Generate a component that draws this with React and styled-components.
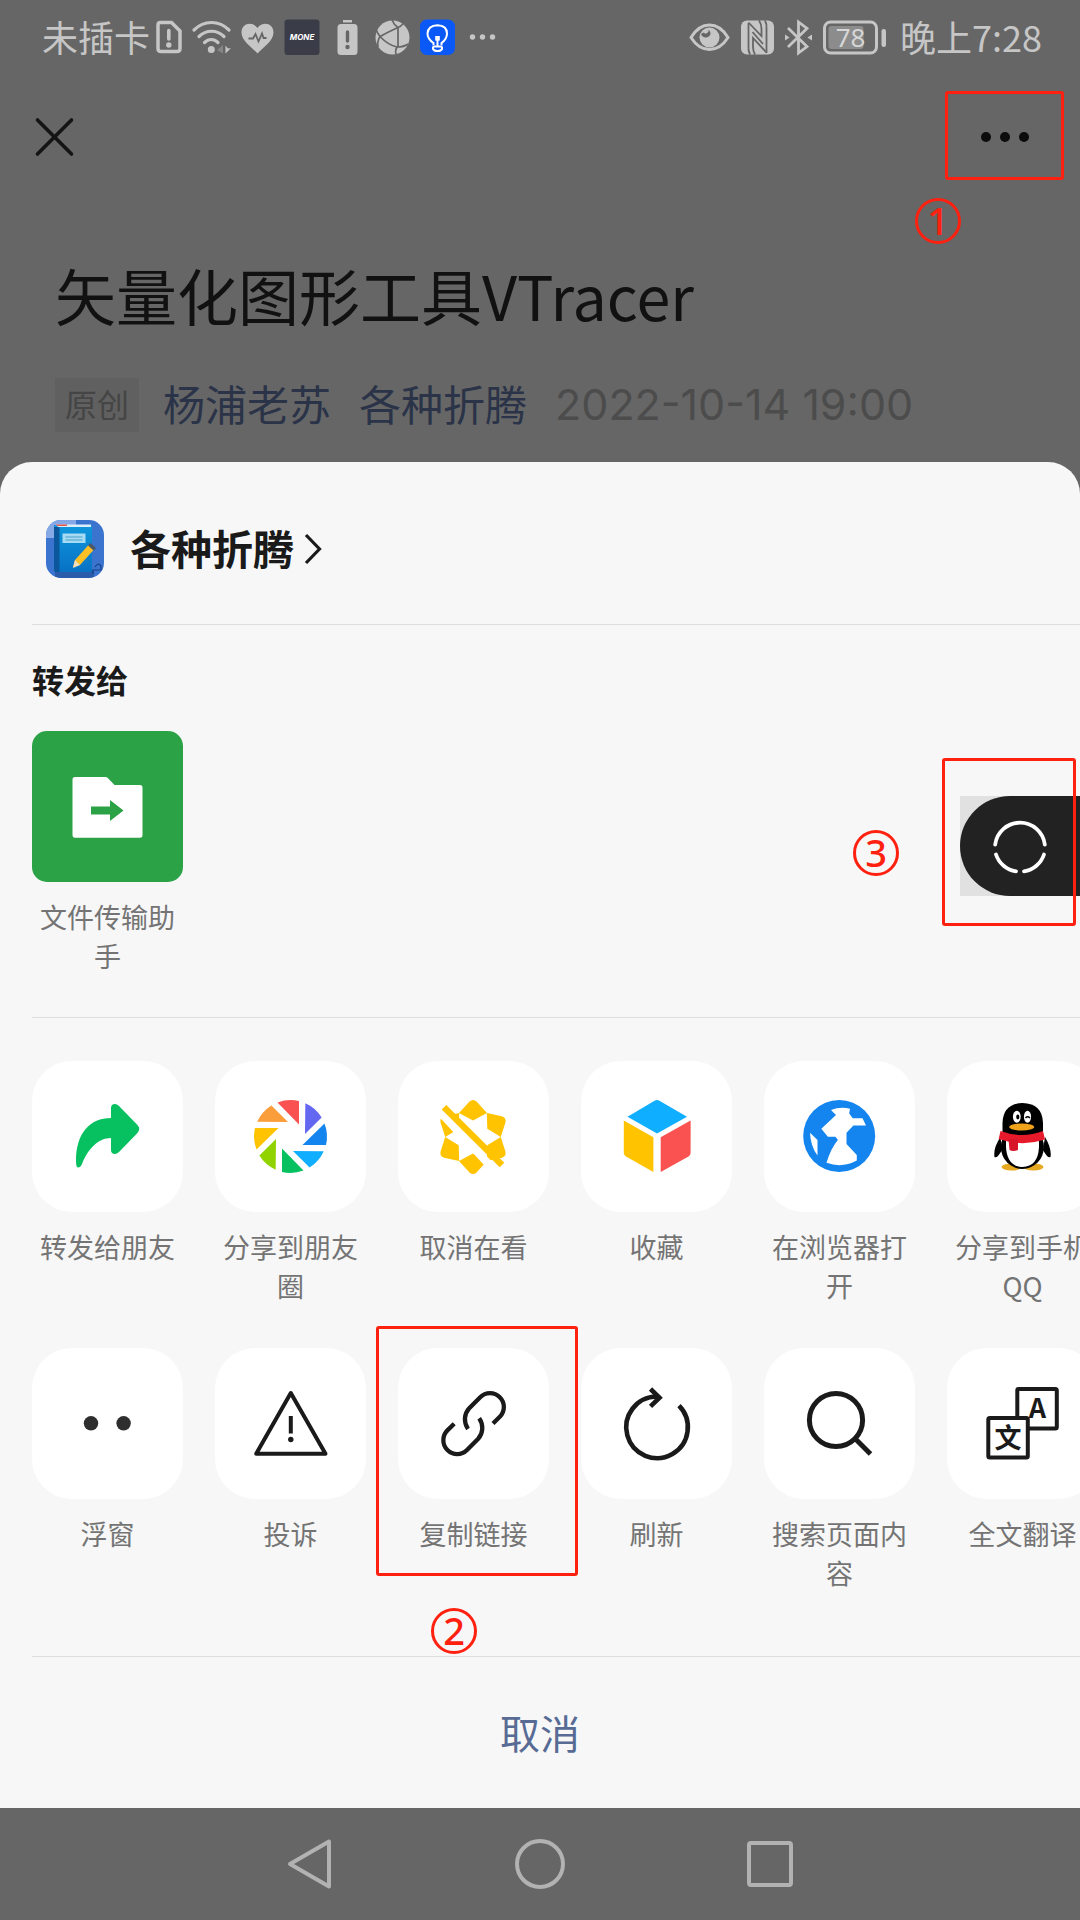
import React from "react";
import styled, { createGlobalStyle } from "styled-components";

const colors = {
  dim: "#666666",
  ink: "#1a1a1a",
  sheet: "#f7f7f7",
  line: "#dedede",
  label: "#747474",
  status: "#c6c6c6",
  mark: "#ff2010",
  link: "#576b95",
};

const GlobalStyle = createGlobalStyle`
  *, *::before, *::after { box-sizing: border-box; }
  body {
    margin: 0;
    background: ${colors.dim};
    font-family: "Noto Sans CJK SC", "Noto Sans", sans-serif;
    color: ${colors.ink};
  }
  button {
    margin: 0;
    padding: 0;
    border: 0;
    background: none;
    color: inherit;
    font: inherit;
    cursor: pointer;
  }
  svg { display: block; flex: none; overflow: visible; }
`;

const Page = styled.div`
  display: flex;
  flex-direction: column;
  min-height: 100vh;
  overflow-x: hidden;
`;

/* Status bar */
const StatusBar = styled.header`
  display: flex;
  align-items: center;
  justify-content: space-between;
  height: 74px;
  padding: 0 38px 0 42px;
  color: ${colors.status};
  font-size: 36px;
  line-height: 48px;
`;

const StatusGroup = styled.div`
  display: flex;
  align-items: center;
  gap: ${(p) => p.$gap}px;
`;

const StatusText = styled.span`
  padding-bottom: 2px;
`;

/* Article behind the sheet */
const TopBar = styled.nav`
  display: flex;
  align-items: center;
  justify-content: space-between;
  height: 126px;
  padding: 0 16px 0 32px;
`;

const IconButton = styled.button`
  position: relative;
  display: flex;
  align-items: center;
  justify-content: center;
  width: ${(p) => p.$w}px;
  height: ${(p) => p.$h}px;
`;

const Article = styled.article`
  padding: 55px 55px 30px;
`;

const Title = styled.h1`
  margin: 0;
  color: #111111;
  font-size: 61px;
  font-weight: 400;
  line-height: 80px;
`;

const Meta = styled.div`
  display: flex;
  align-items: center;
  gap: 28px;
  margin-top: 43px;
  font-size: 42px;
  line-height: 50px;
  white-space: nowrap;
`;

const Tag = styled.span`
  padding: 0 10px 4px;
  margin-right: -4px;
  background: #606060;
  color: #454545;
  font-size: 32px;
`;

const MetaLink = styled.a`
  padding-bottom: 4px;
  color: #2a3348;
  text-decoration: none;
`;

const Time = styled.time`
  padding-bottom: 2px;
  color: #4c4c4c;
  font-family: Inter, "Noto Sans", sans-serif;
  font-size: 43px;
`;

/* Share sheet */
const Sheet = styled.section`
  border-radius: 32px 32px 0 0;
  background: ${colors.sheet};
`;

const Divider = styled.hr`
  height: 1px;
  margin: 0 0 0 32px;
  border: 0;
  background: ${colors.line};
`;

const Account = styled.button`
  display: flex;
  align-items: center;
  padding: 58px 46px 46px;
  font-size: 41px;
  font-weight: 700;
  line-height: 54px;
`;

const AccountName = styled.span`
  padding-bottom: 4px;
  margin: 0 10px 0 26px;
`;

const Recent = styled.section`
  position: relative;
  padding: 30px 32px 42px;
`;

const SectionTitle = styled.h2`
  margin: 0 0 28px;
  font-size: 32px;
  font-weight: 700;
  line-height: 48px;
`;

const Actions = styled.div`
  display: flex;
  flex-direction: column;
  gap: 42px;
  padding: 43px 0 63px 32px;
  overflow-x: auto;
  scrollbar-width: none;
`;

const ActionRow = styled.div`
  display: flex;
  align-items: flex-start;
  gap: 32px;
  min-height: 245px;
`;

const Action = styled.button`
  position: relative;
  display: flex;
  flex: none;
  flex-direction: column;
  align-items: center;
  gap: 15px;
  width: 151px;
  color: ${colors.label};
  font-size: 27px;
  font-weight: 400;
  line-height: 39px;
`;

const Tile = styled.span`
  display: block;
  width: 151px;
  height: 151px;
  border-radius: ${(p) => p.$radius}px;
  background: ${(p) => p.$bg};
  overflow: hidden;
`;

const Cancel = styled.button`
  display: block;
  width: 100%;
  height: 151px;
  padding-bottom: 2px;
  color: ${colors.link};
  font-size: 40px;
`;

/* Floating window handle docked to the right edge */
const FloatDock = styled.div`
  position: absolute;
  top: 171px;
  right: 0;
  background: #e1e1e1;
`;

const FloatButton = styled.button`
  display: block;
  width: 120px;
  height: 100px;
  border-radius: 50px 0 0 50px;
  background: #222222;
`;

/* Tutorial marks laid over the controls */
const Frame = styled.span`
  position: absolute;
  top: ${(p) => p.$top}px;
  right: ${(p) => p.$right}px;
  left: ${(p) => p.$left}px;
  height: ${(p) => p.$h}px;
  border: 3px solid ${colors.mark};
  border-radius: 3px;
  pointer-events: none;
`;

const Step = styled.span`
  position: absolute;
  top: ${(p) => p.$top}px;
  left: ${(p) => p.$left}px;
  width: 46px;
  height: 46px;
  border: 3px solid ${colors.mark};
  border-radius: 50%;
  color: ${colors.mark};
  font-family: "Noto Sans", sans-serif;
  font-size: 38px;
  font-weight: 500;
  line-height: 38px;
  text-align: center;
  pointer-events: none;
`;

/* System navigation */
const SystemNav = styled.nav`
  display: flex;
  flex: 1;
  align-items: center;
  justify-content: center;
  gap: 180px;
  min-height: 112px;
`;

/* Icons */
const SimIcon = () => (
  <svg width="26" height="36" viewBox="0 0 26 36" fill="none" stroke="currentColor">
    <path d="M4.5 3.5H15.5L24 12V29.5Q24 32.500 21 32.500H5Q2 32.500 2 29.500V6Q2 3.500 4.500 3.500Z" strokeWidth="3.500" />
    <path d="M12.800 11.500V20" strokeWidth="3.600" strokeLinecap="round" />
    <circle cx="12.800" cy="26" r="2.700" fill="currentColor" stroke="none" />
  </svg>
);

const WifiIcon = () => (
  <svg width="39" height="36" viewBox="0 0 39 36" fill="none" stroke="currentColor" strokeWidth="3.200" strokeLinecap="round">
    <path d="M2 11C12 1 27 1 37 11" />
    <path d="M7 17.500C14 10.500 25 10.500 32 17.500" />
    <path d="M12.500 23.500C16.500 19.500 22 19.500 26 23.500" />
    <circle cx="19.300" cy="30.500" r="3.500" fill="currentColor" stroke="none" />
    <path d="M25 31L31 26V34.500Z" fill="#858585" stroke="none" />
    <path d="M33.500 26.500V34.500L39 29L36 29.500Z" fill="currentColor" stroke="none" />
  </svg>
);

const HeartIcon = () => (
  <svg width="33" height="36" viewBox="0 0 33 36">
    <path d="M16.500 34.500C12 29 .5 22.500 .5 13.500C.5 4 11.500 2 16.500 9C21.500 2 32.500 4 32.500 13.500C32.500 22.500 21 29 16.500 34.500Z" fill="currentColor" />
    <path d="M7.500 19.500H12L14.500 15L17.500 22.500L21 14.500L22.500 19H25.500" fill="none" stroke={colors.dim} strokeWidth="1.800" />
  </svg>
);

const MoneIcon = () => (
  <svg width="36" height="36" viewBox="0 0 36 36">
    <rect x=".5" width="35" height="35.500" rx="3" y=".5" fill="#3a3c48" />
    <text x="18" y="21" textAnchor="middle" fill="#fff" fontFamily="Inter, sans-serif" fontSize="8" fontWeight="700" fontStyle="italic">MONE</text>
  </svg>
);

const BatteryAlertIcon = () => (
  <svg width="35" height="36" viewBox="0 0 35 36">
    <path d="M13 1H22V3.500H13Z" fill="currentColor" />
    <rect x="7.500" y="5" width="20" height="31" rx="3.500" fill="currentColor" />
    <path d="M17.500 13V22" stroke={colors.dim} strokeWidth="3.400" strokeLinecap="round" />
    <circle cx="17.500" cy="28" r="2.200" fill={colors.dim} />
  </svg>
);

const BallIcon = () => (
  <svg width="35" height="36" viewBox="0 0 35 36">
    <circle cx="17.500" cy="18.500" r="17" fill="currentColor" />
    <g fill="none" stroke={colors.dim} strokeWidth="1.700">
      <path d="M1 10Q2 14 5 17.500Q2 22 3 28" />
      <path d="M5 17.500Q13 13 23 8.500M5 17.500Q13 26 22 28" />
      <path d="M17 1Q19 6 23 8.500Q28 6 28 4" />
      <path d="M23 8.500V28" />
      <path d="M22 28Q20 31 21 35.500M22 28Q29 28 33 25" />
    </g>
  </svg>
);

const BulbIcon = () => (
  <svg width="35" height="36" viewBox="0 0 35 36">
    <rect y=".5" width="35" height="35.500" rx="7" fill="#0a59f7" />
    <g fill="none" stroke="#fff" strokeWidth="2">
      <path d="M13.500 26V24Q7.500 20 7.500 14.500Q8 6.500 17.500 6.200Q27 6.500 27 14.500Q27 20 21.500 24V26" />
      <path d="M12.500 27.500H22.500M13 28V30Q14 32 17.500 32Q21 32 22 30V28" />
      <path d="M17.500 20V27" />
    </g>
    <rect x="15.200" y="17" width="4.600" height="4.600" fill="#fff" />
  </svg>
);

const MoreSmallIcon = () => (
  <svg width="36" height="36" viewBox="0 0 36 36" fill="currentColor">
    <circle cx="7.500" cy="18" r="2.700" />
    <circle cx="17.500" cy="18" r="2.700" />
    <circle cx="27.500" cy="18" r="2.700" />
  </svg>
);

const EyeIcon = () => (
  <svg width="41" height="36" viewBox="0 0 41 36">
    <path d="M2 18.500C8 8.500 15 6 20.500 6S33 8.500 39 18.500C33 28 26 30.500 20.500 30.500S8 28 2 18.500Z" fill="none" stroke="currentColor" strokeWidth="3" />
    <circle cx="20.500" cy="18.500" r="10" fill="currentColor" />
    <path d="M12 15A5 5 0 0 0 21.500 15Q21.500 12.500 19.500 10.500A3 3 0 0 1 14.500 13.500Z" fill={colors.dim} />
  </svg>
);

const NfcIcon = () => (
  <svg width="33" height="36" viewBox="0 0 33 36">
    <rect y="1.500" width="33" height="34" rx="6" fill="currentColor" />
    <g fill="none" stroke={colors.dim} strokeWidth="1.800">
      <path d="M9 35.500Q7 32 7.500 27V4" />
      <path d="M24 1.500Q26 5 25.500 10V34" />
      <path d="M7.500 3.500L20.500 17V10Q20.500 5 18 1.500" />
      <path d="M25.500 33.500L12 19V28Q12 32 14 35.500" />
      <path d="M11.500 13L22 25" />
    </g>
  </svg>
);

const BluetoothIcon = () => (
  <svg width="27" height="36" viewBox="0 0 27 36" fill="none" stroke="currentColor" strokeWidth="2.800">
    <path d="M3 9L22 27.500L13.500 34V3L22 9.500L3 28" />
    <path d="M0 15.500L4.500 18.500L0 21.500ZM27 15.500L22.500 18.500L27 21.500Z" fill="currentColor" stroke="none" />
  </svg>
);

const BatteryIcon = () => (
  <svg width="63" height="36" viewBox="0 0 63 36">
    <rect x="1.500" y="3" width="52" height="31" rx="6" fill="none" stroke="currentColor" strokeWidth="3" />
    <rect x="5.500" y="7" width="35" height="23" rx="3" fill="#8c8c8c" />
    <rect x="58.500" y="10" width="4.500" height="18" rx="2.200" fill="currentColor" />
    <text x="27.500" y="28" textAnchor="middle" fill="#d6d6d6" fontFamily="Noto Sans, sans-serif" fontSize="26">78</text>
  </svg>
);

const CloseIcon = () => (
  <svg width="44" height="44" viewBox="0 0 44 44" stroke="#141414" strokeWidth="3.600" strokeLinecap="round">
    <path d="M5.500 5L39.500 39M39.500 5L5.500 39" />
  </svg>
);

const MenuIcon = () => (
  <svg width="50" height="12" viewBox="0 0 50 12" fill="#0c0c0c">
    <circle cx="6" cy="6" r="5" />
    <circle cx="25" cy="6" r="5" />
    <circle cx="44" cy="6" r="5" />
  </svg>
);

const Avatar = () => (
  <svg width="58" height="58" viewBox="0 0 58 58">
    <defs>
      <clipPath id="avatar-shape"><rect width="58" height="58" rx="15" /></clipPath>
      <linearGradient id="book-cover" x1="0" y1="0" x2="0" y2="1">
        <stop offset="0" stopColor="#0f97dd" />
        <stop offset="1" stopColor="#0872c4" />
      </linearGradient>
    </defs>
    <g clipPath="url(#avatar-shape)">
      <rect width="58" height="58" fill="#3b74cf" />
      <path d="M0 0H30V5H8V18H0Z" fill="#86a9e6" />
      <path d="M9 50H48V58H9Z" fill="#2a5cab" />
      <rect x="8" y="5" width="38" height="47" rx="2" fill="url(#book-cover)" />
      <path d="M8 7H13.500V52H10Q8 52 8 50Z" fill="#0b579b" />
      <path d="M10 4.500H45V7H12Z" fill="#dbeffa" />
      <path d="M10 4.500H21V6H11Z" fill="#e2554b" />
      <rect x="16.500" y="13.500" width="23" height="9.500" fill="#a5dcf4" />
      <path d="M19.500 17H36.500M19.500 20H36.500" stroke="#4d9fc7" strokeWidth="1" />
      <path d="M27 47L29 40L42.500 25L48 29.500L34 45Z" fill="#fcbf25" />
      <path d="M29 40L34 45L27 48Z" fill="#f3dfbc" />
      <path d="M42 25.500L44.500 23L50 28L47.500 30.500Z" fill="#4c5768" />
      <path d="M47 54V50H55V46Q52 42 49 47" fill="none" stroke="#173f86" strokeWidth="1.200" />
    </g>
  </svg>
);

const ChevronIcon = () => (
  <svg width="18" height="32" viewBox="0 0 18 32" fill="none" stroke={colors.ink} strokeWidth="3.200">
    <path d="M2 2L15.500 16L2 30" />
  </svg>
);

const TileSvg = ({ children }) => (
  <svg width="151" height="151" viewBox="0 0 151 151" aria-hidden="true">{children}</svg>
);

const FolderIcon = () => (
  <TileSvg>
    <path d="M43 46H73.500Q75 46 76 47.200L82.500 54H108Q110.500 54 110.500 56.500V104Q110.500 106.700 108 106.700H43Q40.500 106.700 40.500 104V48.500Q40.500 46 43 46Z" fill="#fff" />
    <path d="M59 75.500H78V69L91.500 79.500L78 90V83.500H59Z" fill="#2ba245" />
  </TileSvg>
);

const ForwardIcon = () => (
  <TileSvg>
    <path d="M79 57V47Q79 43 83 43Q85 43 87 45L105 63.500Q109.500 68 105 72.500L87 91Q85 93 83 93Q79 93 79 89V77C66 77 56 88 50 103Q48.500 106.500 46 106.500Q44 106.500 44 100C44 72 58 57 79 57Z" fill="#07c160" />
  </TileSvg>
);

const apertureColors = ["#fa5151", "#6467f0", "#1485ee", "#10aeff", "#07c160", "#91d300", "#ffc300", "#fa9d3b"];
const ApertureIcon = () => (
  <TileSvg>
    {apertureColors.map((c, i) => (
      <path key={c} d="M62.500 41.500A36.500 36.500 0 0 1 84 40V63.500Z" fill={c} transform={`rotate(${i * 45} 75.500 75.500)`} />
    ))}
  </TileSvg>
);

const StarOffIcon = () => (
  <TileSvg>
    {[0, 60, 120, 180, 240, 300].map((a) => (
      <path key={a} d="M71.500 40.500Q75 37.500 78.500 40.500L89 52L75 59.500L61 52Z" fill="#ffc300" transform={`rotate(${a} 75 76)`} />
    ))}
    <path d="M38 46.500L99 112" stroke="#fff" strokeWidth="8" />
    <path d="M46 46.300L104 104" stroke="#ffc300" strokeWidth="6.500" />
  </TileSvg>
);

const CubeIcon = () => (
  <TileSvg>
    <path d="M74 39.500Q76 38.500 78 39.500L106 55.700L76 72.500L46.500 55.700Z" fill="#10aeff" />
    <path d="M42.800 59.500L72.400 76.300V111L45 95.500Q42.800 94 42.800 92Z" fill="#ffc300" />
    <path d="M109.600 59.500L79.700 76.300V111L107.500 95.500Q109.600 94 109.600 92Z" fill="#fa5151" />
  </TileSvg>
);

const GlobeIcon = () => (
  <TileSvg>
    <circle cx="75.200" cy="75" r="36" fill="#1485ee" />
    <path d="M67 49Q76 45.500 86 47.700L85.200 52.500L88.700 57.300H98.500L102 64.500H89.400L82.500 71.700V83L92.800 94V99.500Q78 107.500 62.500 101.700Q67 87 73.900 79L71.500 75.700H63.900L57.300 67.700L72 54Z" fill="#fff" />
    <path d="M46 71.700L53.500 79V94.500Q46.500 85 46 71.700Z" fill="#fff" />
  </TileSvg>
);

const PenguinIcon = () => (
  <TileSvg>
    <ellipse cx="64.500" cy="106" rx="10" ry="3.500" fill="#e6a721" />
    <ellipse cx="86.500" cy="106" rx="10" ry="3.500" fill="#e6a721" />
    <path d="M53.500 76Q46 87 47.500 96Q50 98 55 89ZM98 76Q105 88 103.500 96Q101 98 96 89Z" fill="#000" />
    <ellipse cx="75.400" cy="86" rx="21.500" ry="22" fill="#000" />
    <path d="M55.500 72V62Q56 42.500 75.500 42Q95.500 42.500 96 62V72Z" fill="#000" />
    <path d="M59 80H92V86Q91 105.500 75.500 106Q60 105.500 59 86Z" fill="#fff" />
    <ellipse cx="69.800" cy="55.700" rx="3.900" ry="6" fill="#fff" />
    <ellipse cx="80.500" cy="55.700" rx="3.600" ry="6" fill="#fff" />
    <ellipse cx="70.800" cy="56" rx="1.600" ry="2.400" fill="#000" />
    <path d="M78.500 57Q80.500 54.500 83 57" fill="none" stroke="#000" strokeWidth="1.300" />
    <ellipse cx="74.700" cy="66" rx="12.500" ry="3.500" fill="#f0a31b" />
    <path d="M53.500 70Q75 78 96 70L98 78.500Q75 86 51.700 78Z" fill="#e71a2b" />
    <path d="M61.500 78H71V89Q66 91 62.500 89Z" fill="#d7142a" />
  </TileSvg>
);

const FloatIcon = () => (
  <TileSvg>
    <circle cx="59" cy="75.300" r="7.200" fill="#2e2e2e" />
    <circle cx="91.600" cy="75.300" r="7.200" fill="#2e2e2e" />
  </TileSvg>
);

const WarningIcon = () => (
  <TileSvg>
    <path d="M75.800 45L110.500 105.800H41.200Z" fill="none" stroke={colors.ink} strokeWidth="4" strokeLinejoin="round" />
    <path d="M75.800 68V85.500" stroke={colors.ink} strokeWidth="4" />
    <circle cx="75.800" cy="91.500" r="2.700" fill={colors.ink} />
  </TileSvg>
);

const halfLink = "M95 75.500L101.800 68.800A13.800 13.800 0 0 0 82.200 49.200L71 60.500C66 66 65.500 74.500 70 81";
const LinkIcon = () => (
  <TileSvg>
    <g fill="none" stroke={colors.ink} strokeWidth="4.300">
      <path d={halfLink} />
      <path d={halfLink} transform="rotate(180 75.600 75.600)" />
    </g>
  </TileSvg>
);

const RefreshIcon = () => (
  <TileSvg>
    <g fill="none" stroke={colors.ink} strokeWidth="4.600">
      <path d="M98 57.700A30.800 30.800 0 1 1 75.700 48.500L78 49.500" />
      <path d="M69.500 41L78.500 49.700L69.500 58.300" />
    </g>
  </TileSvg>
);

const SearchIcon = () => (
  <TileSvg>
    <g fill="none" stroke={colors.ink} strokeWidth="5">
      <circle cx="72" cy="72" r="26.600" />
      <path d="M91 90.500L106.500 106" />
    </g>
  </TileSvg>
);

const TranslateIcon = () => (
  <TileSvg>
    <rect x="70.300" y="41" width="39.500" height="39.500" rx="1.500" stroke={colors.ink} strokeWidth="4" fill="#fff" />
    <text x="90.500" y="70.300" textAnchor="middle" fill={colors.ink} fontFamily="Noto Sans CJK SC, sans-serif" fontSize="27" fontWeight="700">A</text>
    <rect x="41.300" y="70" width="39.500" height="39.500" rx="1.500" stroke={colors.ink} strokeWidth="4" fill="#fff" />
    <text x="61" y="99.500" textAnchor="middle" fill={colors.ink} fontFamily="Noto Sans CJK SC, sans-serif" fontSize="27" fontWeight="700">文</text>
  </TileSvg>
);

const RingIcon = () => (
  <svg width="120" height="100" viewBox="0 0 120 100" fill="none" stroke="#fff" strokeWidth="3.800" strokeLinecap="round" aria-hidden="true">
    <path d="M35.200 48.500A25 25 0 0 1 84.800 48.500" />
    <path d="M36 58.500A25 25 0 0 0 56 75.300" />
    <path d="M84 58.500A25 25 0 0 1 64 75.300" />
  </svg>
);

const BackIcon = () => (
  <svg width="50" height="50" viewBox="0 0 50 50" fill="none" stroke="#b2b2b2" strokeWidth="4" strokeLinejoin="round">
    <path d="M44 2.500V47.500L5 25Z" />
  </svg>
);

const HomeIcon = () => (
  <svg width="50" height="50" viewBox="0 0 50 50" fill="none" stroke="#b2b2b2" strokeWidth="4">
    <circle cx="25" cy="25" r="23" />
  </svg>
);

const OverviewIcon = () => (
  <svg width="50" height="50" viewBox="0 0 50 50" fill="none" stroke="#b2b2b2" strokeWidth="4">
    <rect x="4" y="4" width="42" height="42" rx="2" />
  </svg>
);

const shareActions = [
  { label: "转发给朋友", Icon: ForwardIcon },
  { label: "分享到朋友圈", Icon: ApertureIcon },
  { label: "取消在看", Icon: StarOffIcon },
  { label: "收藏", Icon: CubeIcon },
  { label: "在浏览器打开", Icon: GlobeIcon },
  { label: "分享到手机QQ", Icon: PenguinIcon },
];

const toolActions = [
  { label: "浮窗", Icon: FloatIcon },
  { label: "投诉", Icon: WarningIcon },
  { label: "复制链接", Icon: LinkIcon, step: "2" },
  { label: "刷新", Icon: RefreshIcon },
  { label: "搜索页面内容", Icon: SearchIcon },
  { label: "全文翻译", Icon: TranslateIcon },
];

function ActionItem({ label, Icon, step }) {
  return (
    <Action type="button">
      <Tile $radius={40} $bg="#ffffff"><Icon /></Tile>
      <span>{label}</span>
      {step && <Frame $top={-22} $right={-29} $left={-22} $h={250} />}
      {step && <Step $top={260} $left={33}>{step}</Step>}
    </Action>
  );
}

export default function App() {
  return (
    <Page>
      <GlobalStyle />
      <StatusBar>
        <StatusGroup $gap={6}>
          <StatusText>未插卡</StatusText>
          <StatusGroup $gap={10}>
            <SimIcon />
            <WifiIcon />
            <HeartIcon />
            <MoneIcon />
            <BatteryAlertIcon />
            <BallIcon />
            <BulbIcon />
            <MoreSmallIcon />
          </StatusGroup>
        </StatusGroup>
        <StatusGroup $gap={14}>
          <StatusGroup $gap={11}>
            <EyeIcon />
            <NfcIcon />
            <BluetoothIcon />
            <BatteryIcon />
          </StatusGroup>
          <StatusText>晚上7:28</StatusText>
        </StatusGroup>
      </StatusBar>

      <TopBar>
        <IconButton type="button" aria-label="关闭" $w={44} $h={44}><CloseIcon /></IconButton>
        <IconButton type="button" aria-label="更多" $w={119} $h={92}>
          <MenuIcon />
          <Frame $top={0} $right={0} $left={0} $h={89} />
          <Step $top={107} $left={-30}>1</Step>
        </IconButton>
      </TopBar>

      <Article>
        <Title>矢量化图形工具VTracer</Title>
        <Meta>
          <Tag>原创</Tag>
          <MetaLink href="#author">杨浦老苏</MetaLink>
          <MetaLink href="#account">各种折腾</MetaLink>
          <Time dateTime="2022-10-14T19:00">2022-10-14 19:00</Time>
        </Meta>
      </Article>

      <Sheet>
        <Account type="button">
          <Avatar />
          <AccountName>各种折腾</AccountName>
          <ChevronIcon />
        </Account>
        <Divider />
        <Recent>
          <SectionTitle>转发给</SectionTitle>
          <Action type="button">
            <Tile $radius={15} $bg="#2ba245"><FolderIcon /></Tile>
            <span>文件传输助手</span>
          </Action>
          <FloatDock>
            <FloatButton type="button" aria-label="浮窗"><RingIcon /></FloatButton>
            <Frame $top={-38} $right={4} $left={-18} $h={168} />
            <Step $top={34} $left={-107}>3</Step>
          </FloatDock>
        </Recent>
        <Divider />
        <Actions>
          <ActionRow>{shareActions.map((a) => <ActionItem key={a.label} {...a} />)}</ActionRow>
          <ActionRow>{toolActions.map((a) => <ActionItem key={a.label} {...a} />)}</ActionRow>
        </Actions>
        <Divider />
        <Cancel type="button">取消</Cancel>
      </Sheet>

      <SystemNav>
        <IconButton type="button" aria-label="返回" $w={50} $h={50}><BackIcon /></IconButton>
        <IconButton type="button" aria-label="主屏幕" $w={50} $h={50}><HomeIcon /></IconButton>
        <IconButton type="button" aria-label="最近任务" $w={50} $h={50}><OverviewIcon /></IconButton>
      </SystemNav>
    </Page>
  );
}
